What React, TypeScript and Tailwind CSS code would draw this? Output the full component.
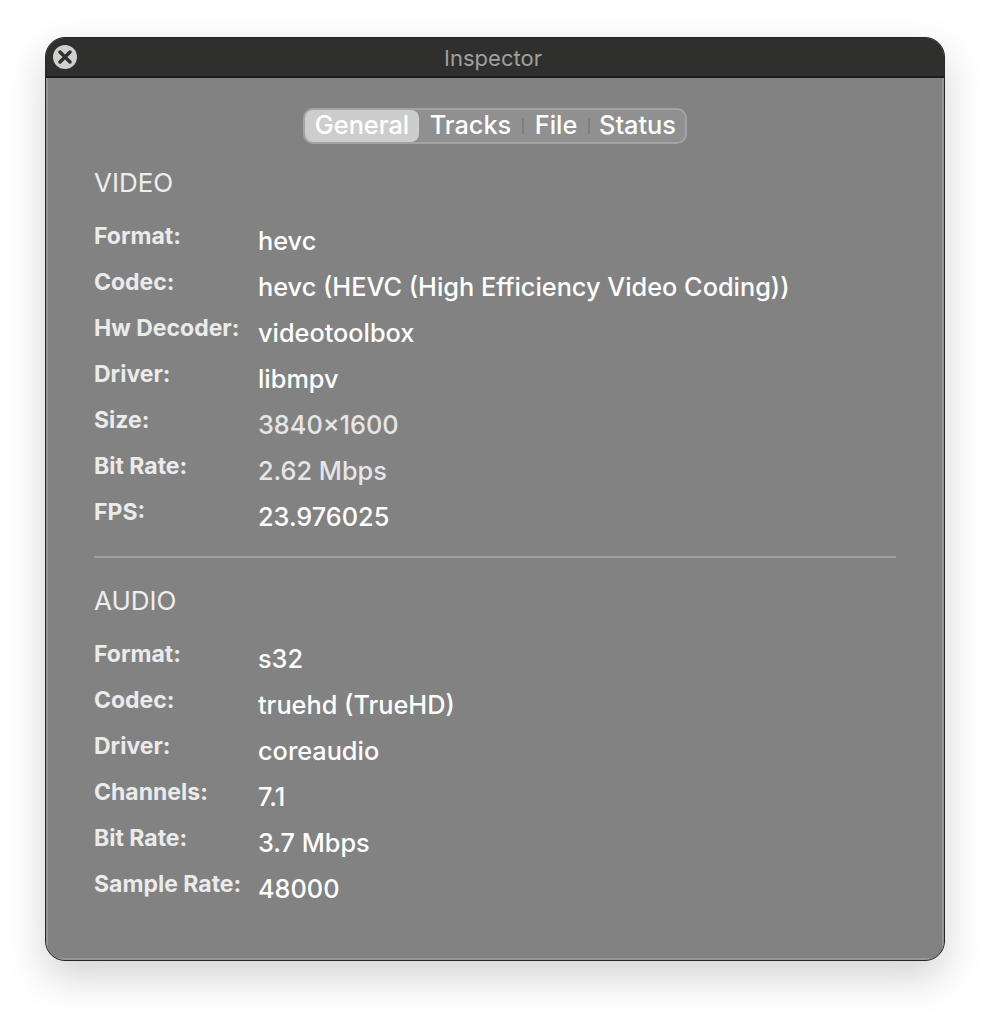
const video = [
  { label: 'Format:', value: 'hevc' },
  { label: 'Codec:', value: 'hevc (HEVC (High Efficiency Video Coding))' },
  { label: 'Hw Decoder:', value: 'videotoolbox' },
  { label: 'Driver:', value: 'libmpv' },
  { label: 'Size:', value: '3840×1600', dim: true },
  { label: 'Bit Rate:', value: '2.62 Mbps', dim: true },
  { label: 'FPS:', value: '23.976025' },
];

const audio = [
  { label: 'Format:', value: 's32' },
  { label: 'Codec:', value: 'truehd (TrueHD)' },
  { label: 'Driver:', value: 'coreaudio' },
  { label: 'Channels:', value: '7.1' },
  { label: 'Bit Rate:', value: '3.7 Mbps' },
  { label: 'Sample Rate:', value: '48000' },
];

function Row({ label, value, dim }: { label: string; value: string; dim?: boolean }) {
  return (
    <div className="flex h-[46px] items-start">
      <div className="w-[164px] shrink-0 text-[23px] leading-[28px] font-bold text-[#ebebeb] whitespace-nowrap">{label}</div>
      <div className={`mt-[4px] text-[25.3px] leading-[30px] font-medium whitespace-nowrap ${dim ? 'text-[#e6e6e6]' : 'text-white'}`}>{value}</div>
    </div>
  );
}

function Tabs() {
  return (
    <div className="flex h-[36px] w-[384px] items-center rounded-[10px] border-2 border-[#a3a3a3] bg-[#909090] text-[25.3px] font-medium text-white">
      <div className="flex h-[32px] w-[114px] items-center justify-center rounded-[8px] bg-[#cdcdcd] pb-[2px]">General</div>
      <div className="flex w-[103px] justify-center pb-[2px]">Tracks</div>
      <div className="h-[16px] w-[2px] bg-[#7f7f7f]" />
      <div className="flex w-[64px] justify-center pb-[2px]">File</div>
      <div className="h-[16px] w-[2px] bg-[#7f7f7f]" />
      <div className="flex flex-1 justify-center pb-[2px]">Status</div>
    </div>
  );
}

export default function App() {
  return (
    <div className="h-[1014px] w-[990px] bg-white pt-[37px] pl-[45px] font-['Inter',sans-serif]">
      <div className="flex h-[924px] w-[900px] flex-col overflow-hidden rounded-[20px] border border-[#262626] bg-[#828282] shadow-[0_16px_40px_rgba(0,0,0,0.18)]">
        <div className="relative flex h-[40px] shrink-0 items-center justify-center border-b-2 border-[#1c1c1c] bg-[#2f2f2d] pr-[4px] pt-[2px] text-[22px] text-[#a0a0a0]">
          <div className="absolute top-[7px] left-[7px] flex h-[24px] w-[24px] items-center justify-center rounded-full bg-[#d0d0d0]">
            <svg width="14" height="14" viewBox="0 0 14 14" fill="none" stroke="#2f2f2d" strokeWidth="3.4" strokeLinecap="round">
              <path d="M2 2 L12 12 M12 2 L2 12" />
            </svg>
          </div>
          Inspector
        </div>
        <div className="flex flex-1 flex-col border-x-2 border-b-2 border-[#969696]">
          <div className="mt-[30px] flex justify-center">
            <Tabs />
          </div>
          <div className="px-[46px]">
            <div className="mt-[24px] text-[26px] leading-[30px] text-[#eeeeee]">VIDEO</div>
            <div className="mt-[24px]">
              {video.map((r) => (
                <Row key={r.label} {...r} />
              ))}
            </div>
            <div className="mt-[12px] h-[2px] bg-[#a0a0a0]" />
            <div className="mt-[28px] text-[26px] leading-[30px] text-[#eeeeee]">AUDIO</div>
            <div className="mt-[24px]">
              {audio.map((r) => (
                <Row key={r.label + r.value} {...r} />
              ))}
            </div>
          </div>
        </div>
      </div>
    </div>
  );
}
